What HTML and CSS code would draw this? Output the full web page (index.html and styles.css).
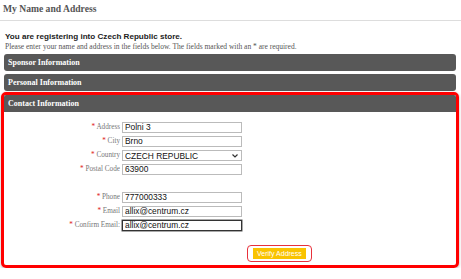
FILE: index.html
```html
<!DOCTYPE html>
<html lang="en">
<head>
  <meta charset="UTF-8" />
  <meta name="viewport" content="width=device-width, initial-scale=1.0"/>
  <title>My Name and Address</title>
  <link rel="stylesheet" href="styles.css">
</head>
<body>
  <div class="page">
    <h1 class="page-title">My Name and Address</h1>

    <div class="content">
      <p class="intro-strong">You are registering into Czech Republic store.</p>
      <p class="intro">Please enter your name and address in the fields below. The fields marked with an * are required.</p>

      <div class="bar">Sponsor Information</div>
      <div class="bar">Personal Information</div>

      <section class="contact">
        <div class="bar">Contact Information</div>

        <form class="fields">
          <label class="label"><span class="req">*</span> Address</label>
          <input class="input" type="text" value="Polni 3">

          <label class="label"><span class="req">*</span> City</label>
          <input class="input" type="text" value="Brno">

          <label class="label"><span class="req">*</span> Country</label>
          <div class="select-wrap">
            <select class="input select">
              <option>CZECH REPUBLIC</option>
            </select>
            <svg class="chevron" width="6" height="4" viewBox="0 0 6 4"><path d="M0.5 0.5 L3 3 L5.5 0.5" fill="none" stroke="#333" stroke-width="1.2"/></svg>
          </div>

          <label class="label"><span class="req">*</span> Postal Code</label>
          <input class="input" type="text" value="63900">

          <div class="spacer"></div>

          <label class="label"><span class="req">*</span> Phone</label>
          <input class="input" type="text" value="777000333">

          <label class="label"><span class="req">*</span> Email</label>
          <input class="input" type="text" value="allix@centrum.cz">

          <label class="label"><span class="req">*</span> Confirm Email:</label>
          <input class="input focus" type="text" value="allix@centrum.cz">
        </form>

        <div class="actions">
          <div class="btn-ring">
            <button class="btn" type="button">Verify Address</button>
          </div>
        </div>
      </section>
    </div>
  </div>
</body>
</html>
```

FILE: styles.css
```css
:root {
  --bar: #585858;
  --label: #777777;
  --red: #ff0000;
  --yellow: #f9c300;
  --serif: 'Liberation Serif', serif;
  --sans: 'Liberation Sans', sans-serif;
}

body {
  margin: 0;
  padding: 0;
  background: #ffffff;
  font-family: var(--serif);
}

.page-title {
  margin: 0;
  height: 21px;
  padding: 2px 0 0 3px;
  box-sizing: border-box;
  border-bottom: 1px solid #dddddd;
  font-family: var(--serif);
  font-size: 9.6px;
  font-weight: bold;
  color: #555555;
  line-height: 14px;
}

.content {
  padding: 10px 5px 0 4px;
}

.intro-strong {
  margin: 0 0 0 1px;
  font-family: var(--sans);
  font-weight: bold;
  font-size: 8.1px;
  line-height: 11px;
  color: #222222;
}

.intro {
  margin: 0 0 3px 1px;
  font-size: 7.5px;
  line-height: 9px;
  color: #555555;
}

.bar {
  height: 17px;
  margin-bottom: 3px;
  padding-left: 4px;
  background: var(--bar);
  border-radius: 3px;
  color: #ffffff;
  font-weight: bold;
  font-size: 8px;
  line-height: 17px;
}

.contact {
  margin: -2px -3px 0 -3px;
  border: 3px solid var(--red);
  border-radius: 5px;
  box-shadow: 0 1px 3px rgba(0, 0, 0, 0.3);
  padding-bottom: 3px;
}

.contact .bar {
  height: 17px;
  margin-bottom: 0;
  border-radius: 2px 2px 0 0;
}

.fields {
  display: grid;
  grid-template-columns: 116px 120px;
  grid-auto-rows: 14px;
  column-gap: 2px;
  padding-top: 8px;
  align-items: center;
}

.label {
  text-align: right;
  font-size: 7.2px;
  line-height: 10px;
  color: var(--label);
}

.req {
  color: #e02020;
}

.input {
  box-sizing: border-box;
  height: 11px;
  width: 120px;
  margin: 0;
  padding: 0 2px;
  border: 1px solid #bbbbbb;
  font-family: var(--sans);
  font-size: 8.4px;
  color: #111111;
  background: #ffffff;
  outline: none;
}

.select-wrap {
  position: relative;
  height: 11px;
}

.select {
  display: block;
  appearance: none;
  -webkit-appearance: none;
  padding: 0 0 0 2px;
  border-radius: 0;
}

.chevron {
  position: absolute;
  right: 4px;
  top: 4px;
  pointer-events: none;
}

.focus {
  border: 1px solid #333333;
  box-shadow: 0 0 0 0.5px #555555;
}

.spacer {
  grid-column: 1 / 3;
}

.actions {
  padding: 10px 0 0 243px;
}

.btn-ring {
  display: inline-block;
  padding: 2px 5px;
  border: 1.5px solid #e8303a;
  border-radius: 4px;
}

.btn {
  display: block;
  height: 11px;
  padding: 0 4px;
  border: none;
  background: var(--yellow);
  color: #ffffff;
  font-family: var(--sans);
  font-size: 7px;
  line-height: 11px;
  cursor: pointer;
}
```
